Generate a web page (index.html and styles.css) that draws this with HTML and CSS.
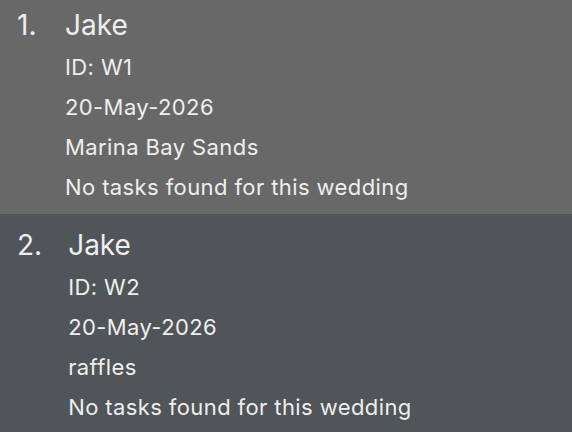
FILE: index.html
```html
<!DOCTYPE html>
<html>
<head>
<meta charset="utf-8">
<link rel="stylesheet" href="styles.css">
</head>
<body>
<div class="list">
  <div class="cell cell-selected">
    <div class="index">1.</div>
    <div class="info">
      <div class="name">Jake</div>
      <div class="line">ID: W1</div>
      <div class="line">20-May-2026</div>
      <div class="line">Marina Bay Sands</div>
      <div class="line">No tasks found for this wedding</div>
    </div>
  </div>
  <div class="cell cell-plain">
    <div class="index">2.</div>
    <div class="info">
      <div class="name">Jake</div>
      <div class="line">ID: W2</div>
      <div class="line">20-May-2026</div>
      <div class="line">raffles</div>
      <div class="line">No tasks found for this wedding</div>
    </div>
  </div>
</div>
</body>
</html>
```
FILE: styles.css
```css
html, body {
  margin: 0;
  padding: 0;
  background: #4f5558;
  overflow: hidden;
}
body {
  font-family: Inter, "Noto Sans", sans-serif;
  color: #eeeeee;
}
.list {
  margin-top: -6px;
}
.cell {
  display: flex;
  height: 220px;
  box-sizing: border-box;
  padding: 9px 0 0 17px;
}
.cell-selected { background: #686868; }
.cell-plain { background: #4f5558; }
.index {
  font-size: 28px;
  line-height: 44px;
  min-width: 22px;
  margin-right: 26px;
}
.name {
  font-size: 28px;
  line-height: 44px;
}
.line {
  font-size: 22px;
  letter-spacing: 0.4px;
  line-height: 40px;
}
```
